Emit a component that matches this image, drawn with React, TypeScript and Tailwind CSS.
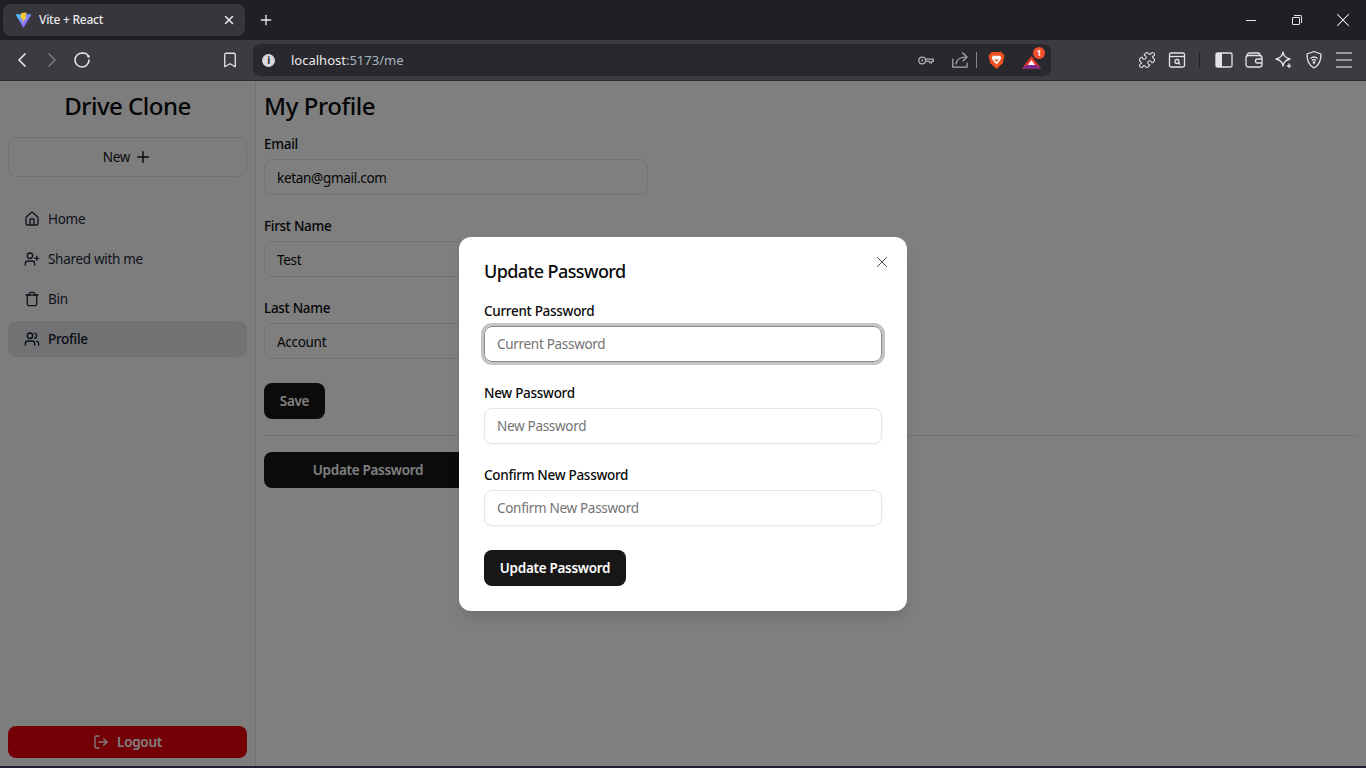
import { Bookmark, ChevronLeft, ChevronRight, House, LogOut, Plus, Puzzle, Trash, UserPlus, Users, X } from 'lucide-react';

const font = 'font-["Noto_Sans","Open_Sans",sans-serif]';

function ViteLogo() {
  return (
    <svg width="17" height="17" viewBox="0 0 18 18">
      <defs>
        <linearGradient id="viteBody" x1="0" y1="0" x2="1" y2="1">
          <stop offset="0" stopColor="#41d1ff" />
          <stop offset="1" stopColor="#bd34fe" />
        </linearGradient>
      </defs>
      <path d="M0.5 2.5 L17.5 2.5 L9 17 Z" fill="url(#viteBody)" />
      <path d="M6.5 1 L12.5 0.5 L10.5 5 L12.5 5 L7.5 12 L8.5 7 L6 7 Z" fill="#ffc928" />
    </svg>
  );
}

function BraveLion() {
  return (
    <svg width="17" height="19" viewBox="0 0 18 20">
      <path d="M4 1 L14 1 L16 3 L17.5 5 L15.5 13 L9 19 L2.5 13 L0.5 5 L2 3 Z" fill="#f1501f" />
      <path d="M5 5 L13 5 L14 8 L11 12 L9 14 L7 12 L4 8 Z" fill="#fff" />
      <path d="M6.5 8 L8 9 L10 9 L11.5 8 L10 11 L8 11 Z" fill="#f1501f" />
    </svg>
  );
}

function BatTriangle() {
  return (
    <span className="relative block w-[19px] h-[20px]">
      <svg width="19" height="13" viewBox="0 0 19 13" className="absolute left-0 top-[6px]">
        <path d="M9.5 0 L19 12.5 L0 12.5 Z" fill="#e8372a" />
        <path d="M0 12.5 L19 12.5 L14.5 9 L4.5 9 Z" fill="#7a2a90" />
        <path d="M9.5 4 L13 9 L6 9 Z" fill="#fff" />
      </svg>
      <span className="absolute left-[11px] top-[-3px] w-[12px] h-[12px] rounded-full bg-[#f4502d] text-white text-[8px] leading-[12px] text-center font-bold tracking-normal">1</span>
    </span>
  );
}

function BrowserChrome() {
  return (
    <>
      <div className="h-10 bg-[#1f1f24] flex items-center pl-[3px] text-[#e8e8ea] shrink-0">
        <div className="w-[242px] h-8 rounded-lg bg-[#36363c] flex items-center pl-[12px] pr-[9px]">
          <ViteLogo />
          <span className="ml-[7px] text-xs font-medium flex-1 tracking-[-0.25px]">Vite + React</span>
          <X size={14} strokeWidth={2.5} />
        </div>
        <Plus size={16} strokeWidth={2} className="ml-[13px]" />
        <div className="flex-1" />
        <div className="flex items-center pr-[12px] text-white">
          <span className="block w-[10px] h-px bg-[#e8e8ea]" />
          <span className="relative block w-[10px] h-[10px] ml-[36px]">
            <span className="absolute left-0 bottom-0 w-[8px] h-[8px] border border-[#e8e8ea] rounded-[1px]" />
            <span className="absolute right-0 top-0 w-[8px] h-[8px] border-t border-r border-[#e8e8ea] rounded-tr-[2px]" />
          </span>
          <X size={22} strokeWidth={1.1} className="ml-[30px]" />
        </div>
      </div>
      <div className="h-[41px] bg-[#3b3b41] flex items-center text-[#e4e4e6] shrink-0 border-b border-[#2c2c30]">
        <ChevronLeft size={24} strokeWidth={1.75} className="ml-[10px]" />
        <ChevronRight size={24} strokeWidth={1.75} className="ml-[6px] text-[#77777c]" />
        <svg width="18" height="18" viewBox="0 0 18 18" className="ml-[9px]" fill="none" stroke="currentColor" strokeWidth="1.6" strokeLinecap="round">
          <path d="M9.5 2 A7 7 0 1 0 16 9" />
          <path d="M9.5 2 L13 2.5 M13 2.5 L15.5 5" />
          <circle cx="15.5" cy="5.5" r="1.3" fill="currentColor" stroke="none" />
        </svg>
        <Bookmark size={18} strokeWidth={1.75} className="ml-[130px]" />
        <div className="ml-[14px] w-[798px] h-8 rounded-lg bg-[#28282d] flex items-center pl-[9px] pr-[10px]">
          <span className="w-[13px] h-[13px] rounded-full bg-[#d8d8da] text-[#28282d] text-[10px] leading-[13px] text-center font-bold">i</span>
          <span className="ml-[16px] mt-[1px] text-[13px] flex-1 text-[#a9b4c0] tracking-normal">
            <span className="text-[#e8e8ea]">localhost</span>:5173/me
          </span>
          <svg width="16" height="9" viewBox="0 0 16 9" fill="none" stroke="#b0b0b4" strokeWidth="1.2" className="mr-[1px]">
            <circle cx="4.2" cy="4.5" r="3.4" />
            <circle cx="4.2" cy="4.5" r="1" fill="#b0b0b4" stroke="none" />
            <path d="M7.6 3.2 H15.4 V5.4 H13.6 V7 H11.8 V5.4 H7.6" strokeLinejoin="round" />
          </svg>
          <svg width="16" height="16" viewBox="0 0 16 16" className="ml-[17px]" fill="none" stroke="#b0b0b4" strokeWidth="1.2" strokeLinecap="round" strokeLinejoin="round">
            <path d="M0.8 7 V15.2 H15 V11" />
            <path d="M4 12 C4.5 7.5 7.5 5 14.5 5" />
            <path d="M10.5 0.8 L15 5 L11 9" />
          </svg>
          <span className="ml-[8px] mr-[11px] block w-px h-[16px] bg-[#88888d]" />
          <BraveLion />
          <span className="ml-[17px]">
            <BatTriangle />
          </span>
        </div>
        <Puzzle size={18} strokeWidth={1.5} className="ml-[87px]" />
        <svg width="18" height="18" viewBox="0 0 18 18" className="ml-[12px]" fill="none" stroke="currentColor" strokeWidth="1.3">
          <rect x="1.5" y="2" width="15" height="14" rx="1.5" />
          <path d="M1.5 5.5 H16.5" />
          <circle cx="9" cy="10.5" r="2" />
          <path d="M10.5 12 L12 13.5" />
        </svg>
        <span className="ml-[13px] block w-px h-[16px] bg-[#1f1f24]" />
        <svg width="18" height="16" viewBox="0 0 18 16" className="ml-[15px]">
          <rect x="1" y="1" width="16" height="14" rx="1.5" fill="none" stroke="currentColor" strokeWidth="1.3" />
          <rect x="1" y="1" width="6" height="14" fill="currentColor" />
        </svg>
        <svg width="18" height="16" viewBox="0 0 18 16" className="ml-[12px]" fill="none" stroke="currentColor" strokeWidth="1.3">
          <path d="M2 4 C2 2 3 1 5 1 H13 C14.5 1 15 2 15 3.5" />
          <rect x="1" y="3.5" width="16" height="11.5" rx="2.5" />
          <path d="M17 7 H12.5 A1.8 1.8 0 0 0 12.5 11 H17" />
        </svg>
        <svg width="20" height="20" viewBox="0 0 20 20" className="ml-[11px]" fill="none" stroke="currentColor" strokeWidth="1.3">
          <path d="M9 2 C9.5 6 11.5 8 16 9 C11.5 10 9.5 12 9 16 C8.5 12 6.5 10 2 9 C6.5 8 8.5 6 9 2 Z" strokeLinejoin="round" />
          <path d="M15 13.5 V18 M12.8 15.8 H17.2" />
        </svg>
        <svg width="18" height="20" viewBox="0 0 18 20" className="ml-[11px]" fill="none" stroke="currentColor" strokeWidth="1.3">
          <path d="M9 1.5 L16 4 C16 11 14 15.5 9 18 C4 15.5 2 11 2 4 Z" strokeLinejoin="round" />
          <path d="M5.5 8.5 C7.5 6.8 10.5 6.8 12.5 8.5 M7 10.5 C8 9.7 10 9.7 11 10.5" />
          <circle cx="9" cy="12.5" r="0.7" fill="currentColor" />
        </svg>
        <svg width="16" height="16" viewBox="0 0 16 16" className="ml-[13px]" stroke="#b8b8bc" strokeWidth="1.6">
          <path d="M0 1 H16 M0 8 H16 M0 15 H16" />
        </svg>
      </div>
    </>
  );
}

function NavItem({ icon, label, active }: { icon: React.ReactNode; label: string; active?: boolean }) {
  return (
    <div className={`h-9 rounded-lg flex items-center gap-2 px-4 text-[13.5px] ${active ? 'bg-[#e2e5e9] font-medium text-[#0f172a]' : 'text-[#1e293b]'}`}>
      {icon}
      {label}
    </div>
  );
}

function Sidebar() {
  return (
    <aside className="w-[256px] shrink-0 h-full border-r border-[#e5e5e5] bg-[#fafafa] p-2 flex flex-col">
      <h1 className="text-center text-2xl font-medium text-[#0a0a0a] h-9 leading-[34px] tracking-[-0.5px]">Drive Clone</h1>
      <button className="mt-3 h-10 rounded-lg border border-[#e5e5e5] flex items-center justify-center gap-1 text-[13.5px] text-[#171717]">
        New <Plus size={18} />
      </button>
      <nav className="mt-6 flex flex-col gap-1">
        <NavItem icon={<House size={16} />} label="Home" />
        <NavItem icon={<UserPlus size={16} />} label="Shared with me" />
        <NavItem icon={<Trash size={16} />} label="Bin" />
        <NavItem icon={<Users size={16} />} label="Profile" active />
      </nav>
      <button className="mt-auto h-8 rounded-lg bg-[#e7000b] text-white text-[13.5px] font-semibold flex items-center justify-center gap-2">
        <LogOut size={16} /> Logout
      </button>
    </aside>
  );
}

function ProfileField({ label, value }: { label: string; value: string }) {
  return (
    <div>
      <label className="block text-[13.5px] font-medium leading-[18px] text-[#0a0a0a]">{label}</label>
      <input
        readOnly
        value={value}
        className="mt-[6px] block w-[384px] h-9 rounded-lg border border-[#e5e5e5] px-3 pt-[2px] text-[13.5px] text-[#0a0a0a] outline-none"
      />
    </div>
  );
}

function ProfilePage() {
  return (
    <main className="flex-1 min-w-0 pt-2 pl-2 pr-[9px]">
      <h2 className="text-2xl font-medium text-[#0a0a0a] h-9 leading-[34px] tracking-[-0.4px]">My Profile</h2>
      <div className="mt-[10px] flex flex-col gap-[22px]">
        <ProfileField label="Email" value="ketan@gmail.com" />
        <ProfileField label="First Name" value="Test" />
        <ProfileField label="Last Name" value="Account" />
      </div>
      <button className="mt-6 h-9 w-[61px] rounded-lg bg-[#171717] text-white text-[13.5px] font-semibold">Save</button>
      <hr className="mt-4 border-[#e5e5e5]" />
      <button className="mt-4 h-9 w-[208px] rounded-lg bg-[#171717] text-white text-[13.5px] font-semibold">Update Password</button>
    </main>
  );
}

function ModalField({ label, focused }: { label: string; focused?: boolean }) {
  return (
    <div>
      <label className="block text-[13.5px] font-medium leading-[18px] text-[#0a0a0a]">{label}</label>
      <input
        placeholder={label}
        className={`mt-[6px] block w-full h-9 rounded-lg border px-3 text-[13.5px] outline-none placeholder:text-[#737373] ${
          focused ? 'border-[#8a8a8a] ring-[3px] ring-[#c4c4c4]' : 'border-[#e5e5e5] shadow-xs'
        }`}
      />
    </div>
  );
}

export default function App() {
  return (
    <div className={`w-[1366px] h-[768px] overflow-hidden flex flex-col bg-[#1f2233] tracking-[-0.3px] ${font}`}>
      <BrowserChrome />
      <div className="relative h-[685px] shrink-0 flex bg-white">
        <Sidebar />
        <ProfilePage />
        <div className="absolute inset-0 bg-black/50 flex items-center justify-center">
          <div className="relative w-[448px] h-[374px] rounded-xl bg-white pt-6 px-[25px] mt-[1px] shadow-lg">
            <h3 className="text-lg font-medium leading-[21px] text-[#0a0a0a] tracking-[-0.6px]">Update Password</h3>
            <button className="absolute right-[16px] top-[16px] text-[#404040]">
              <X size={18} strokeWidth={1.25} />
            </button>
            <div className="mt-[20px] flex flex-col gap-[22px]">
              <ModalField label="Current Password" focused />
              <ModalField label="New Password" />
              <ModalField label="Confirm New Password" />
            </div>
            <button className="mt-6 h-9 w-[142px] rounded-lg bg-[#171717] text-white text-[13.5px] font-semibold">Update Password</button>
          </div>
        </div>
      </div>
    </div>
  );
}
